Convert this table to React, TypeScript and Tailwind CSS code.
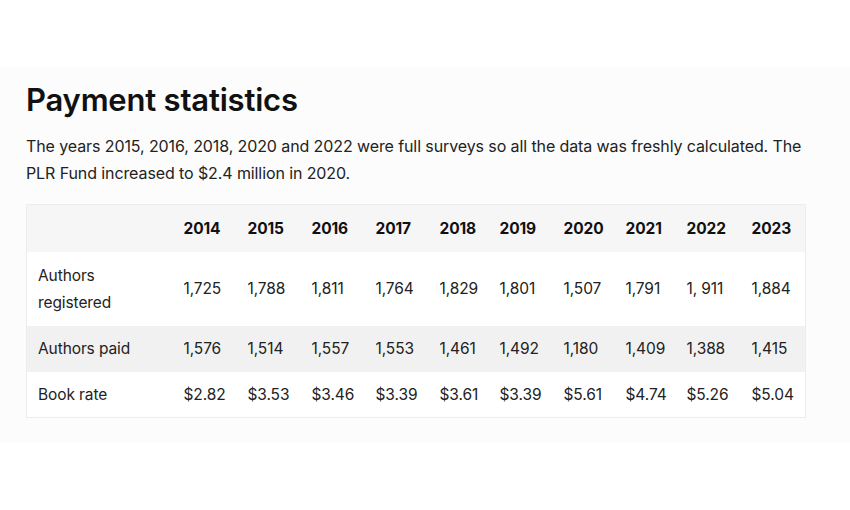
import React from "react";

const years = ["2014","2015","2016","2017","2018","2019","2020","2021","2022","2023"];
const widths = ["w-[64px]","w-[64px]","w-[64px]","w-[64px]","w-[60px]","w-[64px]","w-[62px]","w-[61px]","w-[65px]","w-[65px]"];
const rows: { label: React.ReactNode; vals: string[]; bg: string; h: string }[] = [
  { label: <>Authors<br />registered</>, vals: ["1,725","1,788","1,811","1,764","1,829","1,801","1,507","1,791","1, 911","1,884"], bg: "bg-white", h: "h-[74px]" },
  { label: "Authors paid", vals: ["1,576","1,514","1,557","1,553","1,461","1,492","1,180","1,409","1,388","1,415"], bg: "bg-[#f1f1f1]", h: "h-[46px]" },
  { label: "Book rate", vals: ["$2.82","$3.53","$3.46","$3.39","$3.61","$3.39","$5.61","$4.74","$5.26","$5.04"], bg: "bg-white", h: "h-[46px]" },
];

export default function App() {
  return (
    <div className="w-[850px] h-[510px] bg-white" style={{ fontFamily: "Inter, 'Open Sans', sans-serif" }}>
      <div className="h-[66px]" />
      <div className="bg-[#fcfcfc] h-[376px] px-[26px] pt-[14px]">
        <h2 className="text-[31px] leading-[40px] font-semibold text-[#111] tracking-[-0.2px]">Payment statistics</h2>
        <p className="mt-[13px] text-[16px] leading-[27px] text-[#222] w-[780px] tracking-[-0.1px]">
          The years 2015, 2016, 2018, 2020 and 2022 were full surveys so all the data was freshly calculated. The PLR Fund increased to $2.4 million in 2020.
        </p>
        <table className="mt-[17px] table-fixed border-collapse border border-[#ececec] w-[780px] text-[15.5px] text-[#222] tracking-[-0.1px]">
          <thead>
            <tr className="bg-[#f6f6f6] h-[47px]">
              <th className="w-[146px]" />
              {years.map((y, i) => (
                <th key={y} className={`${widths[i]} text-left pl-[11px] font-bold text-[#111]`}>{y}</th>
              ))}
            </tr>
          </thead>
          <tbody>
            {rows.map((r, ri) => (
              <tr key={ri} className={`${r.bg} ${r.h}`}>
                <td className="pl-[11px] leading-[27px] align-middle">{r.label}</td>
                {r.vals.map((v, i) => (
                  <td key={i} className="pl-[11px] whitespace-nowrap">{v}</td>
                ))}
              </tr>
            ))}
          </tbody>
        </table>
      </div>
    </div>
  );
}
